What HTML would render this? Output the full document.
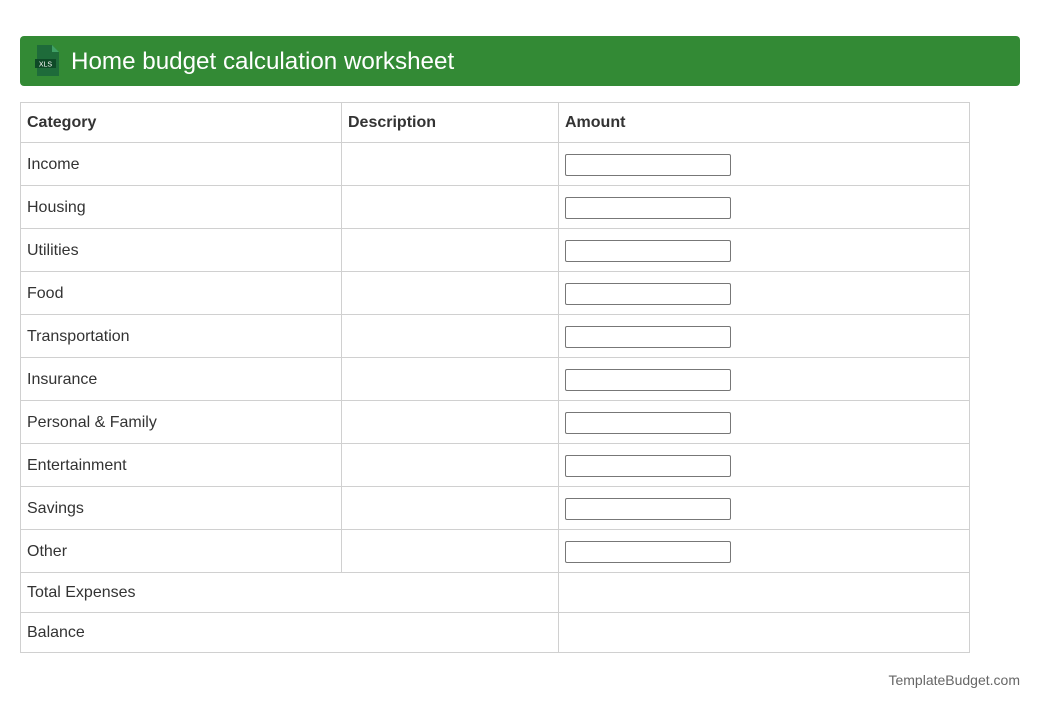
<!DOCTYPE html>
<html><head><style>
body{margin:0;background:#fff;font-family:"Liberation Sans",Roboto,sans-serif;width:1040px;height:710px;position:relative;overflow:hidden}
.hd{position:absolute;left:20px;top:36px;width:1000px;height:50px;background:#338a35;border-radius:4px}
.hd span{position:absolute;left:51px;top:12px;color:#fff;font-size:24.2px}
table{position:absolute;left:20px;top:102px;border-collapse:collapse;width:950px;font-size:16px;color:#333}
td{border:1px solid #d0d0d0;padding:1px 0 0 6px;height:43px;box-sizing:border-box}
tr.h td{font-weight:bold;height:40px}
tr.t td{height:40px}
.in{width:166px;height:22px;border:1px solid #777;border-radius:2px;box-sizing:border-box}
.ft{position:absolute;right:20px;top:672px;font-size:14px;color:#666}
</style></head><body>
<div class="hd">
<svg style="position:absolute;left:15px;top:9px" width="26" height="32" viewBox="0 0 26 32">
<path d="M2 0H17L24 7V31H2Z" fill="#1e6b3a"/><path d="M17 0V7H24Z" fill="#3fa065"/>
<rect x="0" y="14" width="21" height="9" fill="#0e4a27"/>
<text x="10.5" y="21.5" font-size="7" fill="#fff" text-anchor="middle" font-family="Liberation Sans">XLS</text></svg>
<span>Home budget calculation worksheet</span></div>
<table>
<tr class="h"><td style="width:321px">Category</td><td style="width:217px">Description</td><td>Amount</td></tr>
<tr><td>Income</td><td></td><td><div class="in"></div></td></tr>
<tr><td>Housing</td><td></td><td><div class="in"></div></td></tr>
<tr><td>Utilities</td><td></td><td><div class="in"></div></td></tr>
<tr><td>Food</td><td></td><td><div class="in"></div></td></tr>
<tr><td>Transportation</td><td></td><td><div class="in"></div></td></tr>
<tr><td>Insurance</td><td></td><td><div class="in"></div></td></tr>
<tr><td>Personal &amp; Family</td><td></td><td><div class="in"></div></td></tr>
<tr><td>Entertainment</td><td></td><td><div class="in"></div></td></tr>
<tr><td>Savings</td><td></td><td><div class="in"></div></td></tr>
<tr><td>Other</td><td></td><td><div class="in"></div></td></tr>
<tr class="t"><td colspan="2">Total Expenses</td><td></td></tr>
<tr class="t"><td colspan="2">Balance</td><td></td></tr>
</table>
<div class="ft">TemplateBudget.com</div>
</body></html>
